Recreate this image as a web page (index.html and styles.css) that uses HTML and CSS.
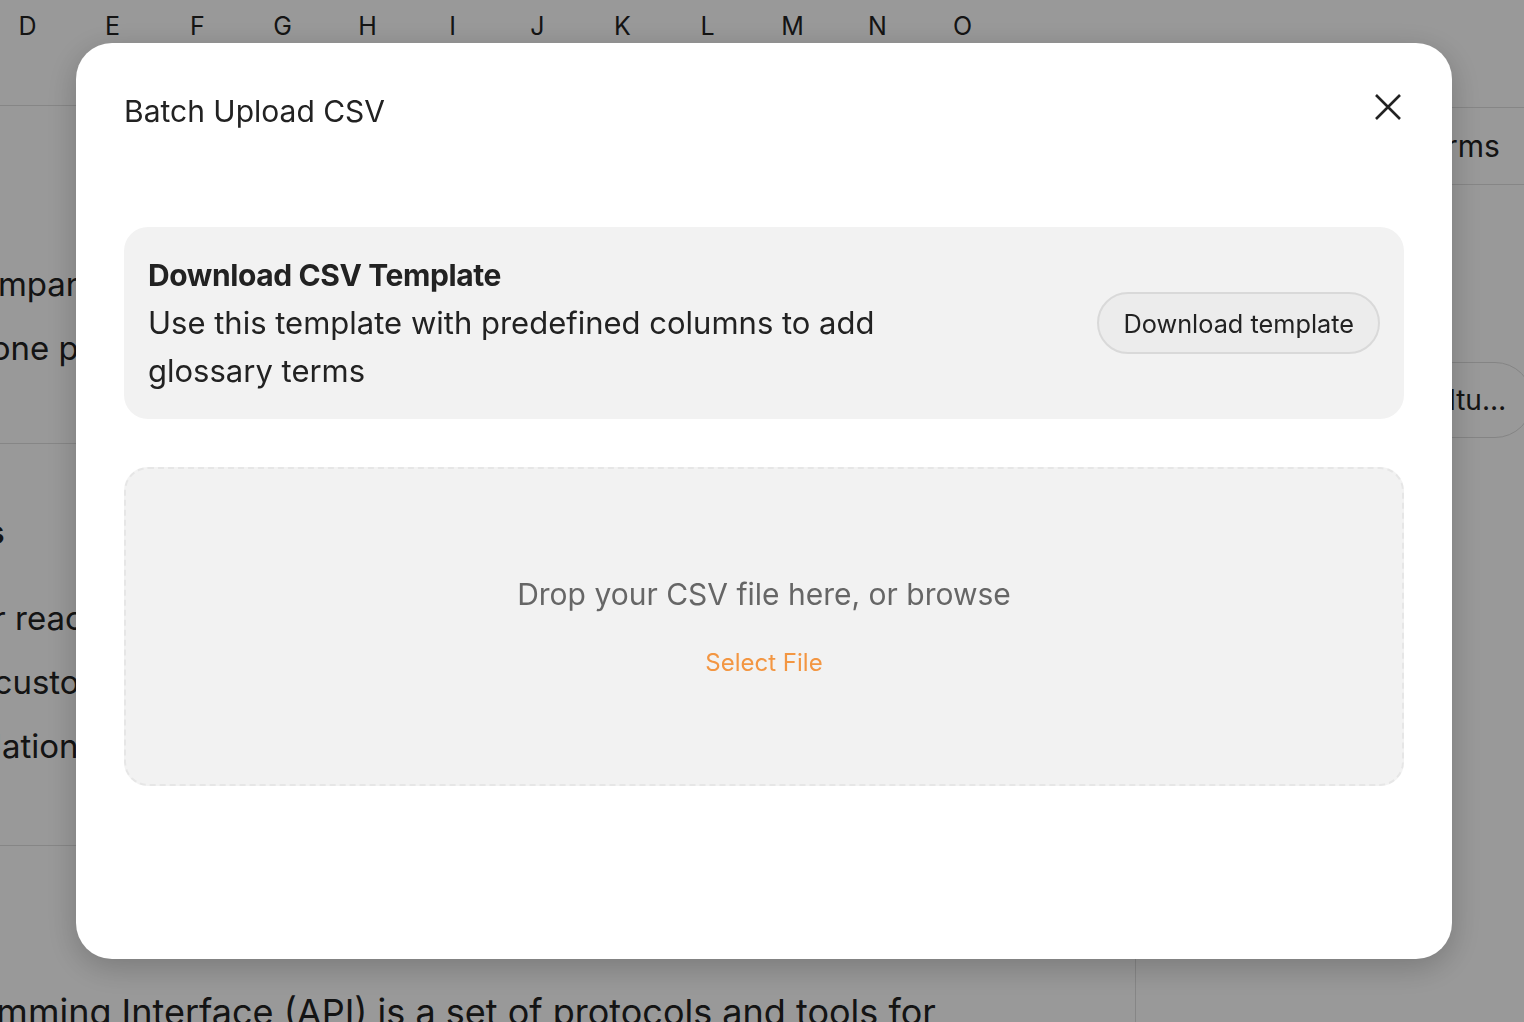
FILE: index.html
```html
<!DOCTYPE html>
<html lang="en">
<head>
  <meta charset="UTF-8" />
  <meta name="viewport" content="width=device-width, initial-scale=1.0"/>
  <title>Batch Upload CSV</title>
  <link rel="stylesheet" href="styles.css">
</head>
<body>

  <div class="page">
    <div class="columns">
      <span>D</span><span>E</span><span>F</span><span>G</span>
      <span>H</span><span>I</span><span>J</span><span>K</span><span>L</span><span>M</span><span>N</span><span>O</span>
    </div>

    <div class="layout">
      <div class="main">
        <div class="row row-first">
          <p>Company</p>
          <p>in one place</p>
        </div>
        <div class="row row-second">
          <h4>Benefits</h4>
          <p>our reach</p>
          <p>to customers</p>
          <p>Relations</p>
        </div>
        <div class="row row-last">
          <p>Application Programming Interface (API) is a set of protocols and tools for</p>
        </div>
      </div>

      <aside class="side">
        <div class="side-head">Related Glossary Terms</div>
        <div class="side-body">
          <span class="pill">Culture and Values</span>
        </div>
      </aside>
    </div>
  </div>

  <div class="overlay">
    <div class="modal">
      <div class="modal-head">
        <h2>Batch Upload CSV</h2>
        <button class="close" aria-label="Close">
          <svg width="28" height="28" viewBox="0 0 28 28">
            <path d="M2 2L26 26M26 2L2 26" stroke="#222" stroke-width="2.6" fill="none"/>
          </svg>
        </button>
      </div>

      <div class="template">
        <div class="template-text">
          <h3>Download CSV Template</h3>
          <p>Use this template with predefined columns to add glossary terms</p>
        </div>
        <button class="btn-template">Download template</button>
      </div>

      <div class="dropzone">
        <p class="drop-text">Drop your CSV file here, or browse</p>
        <a href="#" class="select-file">Select File</a>
      </div>
    </div>
  </div>

</body>
</html>
```

FILE: styles.css
```css
* {
  box-sizing: border-box;
}
body {
  margin: 0;
  font-family: Inter, "Noto Sans", sans-serif;
  color: #222;
  background: #fff;
  overflow: hidden;
  height: 1022px;
}
p, h2, h3, h4 {
  margin: 0;
}

/* page behind the modal */
.page {
  height: 100%;
}
.columns {
  display: flex;
  height: 52px;
  align-items: center;
  margin-left: -15px;
  font-size: 25px;
  color: #222;
}
.columns span {
  width: 85px;
  text-align: center;
}
.layout {
  display: flex;
  height: 970px;
}
.main {
  flex: none;
  width: 1136px;
  border-right: 1px solid #e0e0e0;
  margin-top: 53px;
  overflow: hidden;
}
.row {
  border-top: 1px solid #e0e0e0;
  font-size: 33px;
  line-height: 64px;
  padding-left: 0;
  margin-left: -46px;
}
.row-first {
  height: 338px;
  padding-top: 146px;
}
.row-second {
  height: 402px;
  padding-top: 56px;
}
.row-second h4 {
  font-size: 33px;
  font-weight: 700;
  margin-bottom: 22px;
  margin-left: -84px;
}
.row-last {
  padding-top: 134px;
  white-space: nowrap;
  font-size: 36px;
  margin-left: -318px;
}
.side {
  flex: 1;
  margin-top: 55px;
  overflow: hidden;
}
.side-head {
  border-top: 1px solid #e0e0e0;
  border-bottom: 1px solid #e0e0e0;
  height: 78px;
  display: flex;
  align-items: center;
  padding-left: 28px;
  font-size: 30px;
  white-space: nowrap;
}
.side-body {
  padding: 177px 0 0 251px;
  white-space: nowrap;
}
.pill {
  display: inline-block;
  max-width: 146px;
  height: 76px;
  line-height: 74px;
  border: 1px solid #ddd;
  border-radius: 38px;
  padding: 0 24px;
  font-size: 28px;
  white-space: nowrap;
  overflow: hidden;
  text-overflow: ellipsis;
}

/* modal */
.overlay {
  position: fixed;
  inset: 0;
  background: rgba(0, 0, 0, 0.4);
  padding: 43px 0 0 76px;
}
.modal {
  width: 1376px;
  height: 916px;
  background: #fff;
  border-radius: 36px;
  box-shadow: 0 8px 32px rgba(0, 0, 0, 0.22);
  padding: 48px 48px;
}
.modal-head {
  display: flex;
  justify-content: space-between;
  align-items: center;
  height: 40px;
  margin-bottom: 96px;
}
.modal-head h2 {
  font-size: 30px;
  font-weight: 400;
  color: #222;
}
.close {
  border: none;
  background: none;
  padding: 0;
  margin: 0 2px 8px 0;
  cursor: pointer;
  display: flex;
}

.template {
  display: flex;
  align-items: center;
  justify-content: space-between;
  background: #f2f2f2;
  border-radius: 24px;
  padding: 24px 24px;
}
.template-text {
  max-width: 790px;
}
.template h3 {
  font-size: 30px;
  font-weight: 700;
  line-height: 48px;
  letter-spacing: -0.4px;
}
.template p {
  font-size: 31px;
  line-height: 48px;
  color: #222;
}
.btn-template {
  height: 62px;
  padding: 0 24px;
  border: 2px solid #d9d9d9;
  border-radius: 31px;
  background: #ececec;
  font-family: inherit;
  font-size: 25.3px;
  color: #222;
}

.dropzone {
  margin-top: 48px;
  height: 319px;
  background: #f2f2f2;
  border: 2px dashed #e6e6e6;
  border-radius: 24px;
  display: flex;
  flex-direction: column;
  align-items: center;
  justify-content: center;
  gap: 36px;
}
.drop-text {
  font-size: 30px;
  color: #666;
}
.select-file {
  font-size: 24px;
  color: #f39642;
  text-decoration: none;
}
```
